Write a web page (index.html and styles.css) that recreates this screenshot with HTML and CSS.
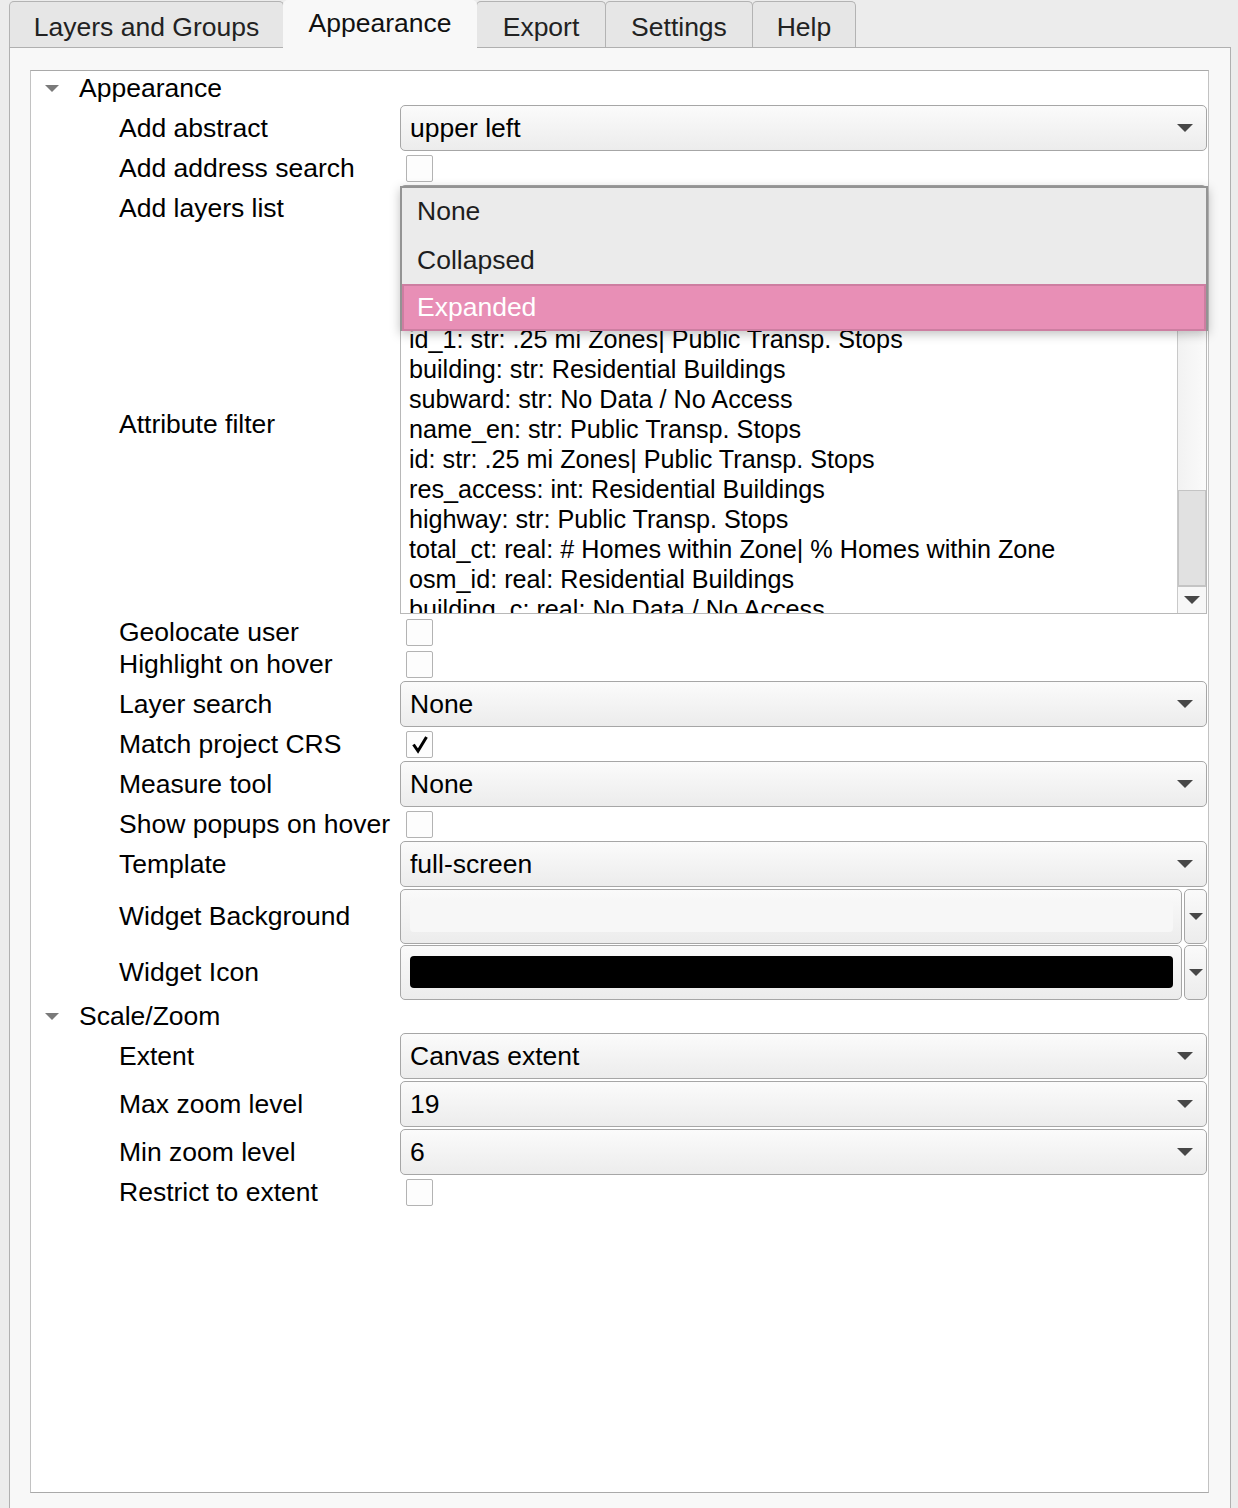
FILE: index.html
```html
<!DOCTYPE html>
<html>
<head>
<meta charset="utf-8">
<link rel="stylesheet" href="styles.css">
</head>
<body>
<div class="tabbar">
  <div class="tab tab-layers">Layers and Groups</div>
  <div class="tab active tab-appearance">Appearance</div>
  <div class="tab tab-export">Export</div>
  <div class="tab tab-settings">Settings</div>
  <div class="tab tab-help">Help</div>
</div>
<div class="pane">
  <div class="tree">
    <div class="row header header-first"><span class="twisty"></span><span class="section">Appearance</span></div>

    <div class="row combo-row"><span class="label">Add abstract</span>
      <div class="field"><div class="combo"><span class="value">upper left</span><span class="arrow"></span></div></div></div>

    <div class="row check-row"><span class="label">Add address search</span>
      <div class="field"><span class="checkbox"></span></div></div>

    <div class="row combo-row"><span class="label label-top">Add layers list</span>
      <div class="field field-popup">
        <div class="combo"><span class="value"></span><span class="arrow"></span></div>
        <div class="popup">
          <div class="popup-item">None</div>
          <div class="popup-item">Collapsed</div>
          <div class="popup-item selected">Expanded</div>
        </div>
      </div></div>

    <div class="row list-row"><span class="label">Attribute filter</span>
      <div class="field">
        <div class="listbox">
          <div class="list-items">
            <div class="list-line">id_1: str: .25 mi Zones| Public Transp. Stops</div>
            <div class="list-line">building: str: Residential Buildings</div>
            <div class="list-line">subward: str: No Data / No Access</div>
            <div class="list-line">name_en: str: Public Transp. Stops</div>
            <div class="list-line">id: str: .25 mi Zones| Public Transp. Stops</div>
            <div class="list-line">res_access: int: Residential Buildings</div>
            <div class="list-line">highway: str: Public Transp. Stops</div>
            <div class="list-line">total_ct: real: # Homes within Zone| % Homes within Zone</div>
            <div class="list-line">osm_id: real: Residential Buildings</div>
            <div class="list-line">building_c: real: No Data / No Access</div>
          </div>
          <div class="scrollbar">
            <div class="track"><div class="thumb"></div></div>
            <div class="scroll-btn"><span class="arrow"></span></div>
          </div>
        </div>
      </div></div>

    <div class="row check-row"><span class="label">Geolocate user</span>
      <div class="field"><span class="checkbox"></span></div></div>
    <div class="row check-row"><span class="label">Highlight on hover</span>
      <div class="field"><span class="checkbox"></span></div></div>
    <div class="row combo-row"><span class="label">Layer search</span>
      <div class="field"><div class="combo"><span class="value">None</span><span class="arrow"></span></div></div></div>
    <div class="row check-row"><span class="label">Match project CRS</span>
      <div class="field"><span class="checkbox"><svg width="20" height="20" viewBox="0 0 20 20"><path d="M3.5 10.5 L8 17 L16.5 3" fill="none" stroke="#000" stroke-width="3" stroke-linejoin="miter"/></svg></span></div></div>
    <div class="row combo-row"><span class="label">Measure tool</span>
      <div class="field"><div class="combo"><span class="value">None</span><span class="arrow"></span></div></div></div>
    <div class="row check-row"><span class="label">Show popups on hover</span>
      <div class="field"><span class="checkbox"></span></div></div>
    <div class="row combo-row"><span class="label">Template</span>
      <div class="field"><div class="combo"><span class="value">full-screen</span><span class="arrow"></span></div></div></div>

    <div class="row color-row"><span class="label">Widget Background</span>
      <div class="field color-field">
        <div class="colorbtn"><div class="swatch swatch-light"></div></div>
        <div class="colorarrow"><span class="arrow"></span></div>
      </div></div>
    <div class="row color-row"><span class="label">Widget Icon</span>
      <div class="field color-field">
        <div class="colorbtn"><div class="swatch swatch-dark"></div></div>
        <div class="colorarrow"><span class="arrow"></span></div>
      </div></div>

    <div class="row header"><span class="twisty"></span><span class="section">Scale/Zoom</span></div>
    <div class="row combo-row"><span class="label">Extent</span>
      <div class="field"><div class="combo"><span class="value">Canvas extent</span><span class="arrow"></span></div></div></div>
    <div class="row combo-row"><span class="label">Max zoom level</span>
      <div class="field"><div class="combo"><span class="value">19</span><span class="arrow"></span></div></div></div>
    <div class="row combo-row"><span class="label">Min zoom level</span>
      <div class="field"><div class="combo"><span class="value">6</span><span class="arrow"></span></div></div></div>
    <div class="row check-row"><span class="label">Restrict to extent</span>
      <div class="field"><span class="checkbox"></span></div></div>
  </div>
</div>
</body>
</html>
```

FILE: styles.css
```css
html, body {
  margin: 0;
  padding: 0;
  height: 100%;
  overflow: hidden;
}
body {
  background: #ececec;
  font-family: "Liberation Sans", Arial, sans-serif;
  font-size: 26.5px;
  color: #000;
}
.tabbar {
  display: flex;
  align-items: flex-end;
  height: 47px;
  padding-left: 9px;
  box-sizing: border-box;
}
.tab {
  height: 46px;
  box-sizing: border-box;
  border: 1px solid #b3b3b3;
  border-bottom: none;
  border-radius: 5px 5px 0 0;
  background: #e6e6e6;
  color: #222;
  display: flex;
  align-items: center;
  justify-content: center;
  padding-top: 6px;
}
.tab + .tab { margin-left: -1px; }
.tab-layers { width: 275px; }
.tab-appearance { width: 194px; }
.tab-export { width: 130px; }
.tab-settings { width: 148px; }
.tab-help { width: 104px; }
.tab.active {
  background: #f8f8f8;
  border-color: transparent;
  height: 48px;
  margin-bottom: -1px;
  position: relative;
  z-index: 1;
  padding-top: 0;
  padding-bottom: 2px;
  color: #111;
}
.pane {
  margin-left: 9px;
  width: 1222px;
  box-sizing: border-box;
  border: 1px solid #b0b0b0;
  background: #f8f8f8;
  padding: 22px 21px 40px 20px;
}
.tree {
  height: 1423px;
  box-sizing: border-box;
  background: #fff;
  border: 1px solid #c2c2c2;
  border-top-color: #a9a9a9;
  border-bottom-color: #a9a9a9;
}
.row {
  display: flex;
  align-items: center;
}
.header { height: 32px; }
.header-first { height: 33px; padding-top: 1px; box-sizing: border-box; }
.twisty {
  width: 0;
  height: 0;
  margin-left: 14px;
  border-left: 7px solid transparent;
  border-right: 7px solid transparent;
  border-top: 7px solid #7a7a7a;
  margin-right: 20px;
}
.section { white-space: nowrap; }
.label {
  width: 281px;
  margin-left: 88px;
  flex: none;
  white-space: nowrap;
}
.field {
  flex: 1;
  margin-right: 1px;
  display: flex;
  align-items: center;
}
.check-row { height: 32px; }
.combo-row { height: 48px; }
.color-row { height: 56px; }
.list-row { height: 384px; }

.combo {
  flex: 1;
  height: 46px;
  box-sizing: border-box;
  border: 1.5px solid #a6a6a6;
  border-radius: 5px;
  background: linear-gradient(#fbfbfb, #ececec);
  display: flex;
  align-items: center;
  padding: 0 13px 0 9px;
}
.combo .value { flex: 1; white-space: nowrap; }
.arrow {
  width: 0;
  height: 0;
  border-left: 8px solid transparent;
  border-right: 8px solid transparent;
  border-top: 8px solid #474747;
  flex: none;
}
.checkbox {
  width: 27px;
  height: 27px;
  box-sizing: border-box;
  margin-left: 6px;
  border: 1.5px solid #b3b3b3;
  border-radius: 2px;
  background: #fdfdfd;
  display: flex;
  align-items: center;
  justify-content: center;
}
.checkbox svg { display: block; }

.field-popup { position: relative; }
.popup {
  position: absolute;
  top: 1px;
  left: 0;
  width: 808px;
  height: 145px;
  box-sizing: border-box;
  border: 2px solid #939393;
  background: #ebebeb;
  box-shadow: 0 3px 10px rgba(0,0,0,0.25);
  z-index: 5;
}
.popup-item {
  height: 48px;
  box-sizing: border-box;
  display: flex;
  align-items: center;
  padding-left: 15px;
  color: #1e1e1e;
}
.popup-item:first-child { padding-bottom: 2px; }
.popup-item.selected {
  background: #e88fb6;
  border: 2px solid #cd7ea1;
  color: #fff;
  padding-left: 13px;
  height: 47px;
}

.listbox {
  flex: 1;
  height: 380px;
  box-sizing: border-box;
  border: 1px solid #b8b8b8;
  background: #fff;
  display: flex;
  overflow: hidden;
}
.list-items {
  flex: 1;
  overflow: hidden;
  padding-left: 8px;
  padding-top: 89px;
  font-size: 25.2px;
}
.list-line {
  height: 30px;
  line-height: 30px;
  white-space: nowrap;
}
.scrollbar {
  width: 28px;
  flex: none;
  border-left: 1px solid #c9c9c9;
  display: flex;
  flex-direction: column;
  background: linear-gradient(90deg, #f2f2f2, #fafafa);
}
.track {
  flex: 1;
  display: flex;
  flex-direction: column;
  justify-content: flex-end;
}
.thumb {
  height: 96px;
  background: #e1e1e1;
  border: 1px solid #c4c4c4;
  box-sizing: border-box;
}
.scroll-btn {
  height: 26px;
  display: flex;
  align-items: center;
  justify-content: center;
  border-top: 1px solid #c4c4c4;
  background: #f7f7f7;
}

.color-field { gap: 2px; }
.colorbtn {
  flex: 1;
  height: 55px;
  box-sizing: border-box;
  border: 1.5px solid #a6a6a6;
  border-radius: 5px;
  background: linear-gradient(#fafafa, #ececec);
  padding: 10.5px 8px 10.5px 8.5px;
}
.swatch {
  height: 32px;
  border-radius: 4px;
}
.swatch-light { background: #f7f7f7; }
.swatch-dark { background: #000; }
.colorarrow {
  width: 23px;
  height: 55px;
  box-sizing: border-box;
  border: 1.5px solid #a6a6a6;
  border-radius: 5px;
  background: linear-gradient(#fafafa, #ececec);
  display: flex;
  align-items: center;
  justify-content: center;
}
.colorarrow .arrow {
  border-left-width: 7px;
  border-right-width: 7px;
  border-top-width: 7px;
}
```
